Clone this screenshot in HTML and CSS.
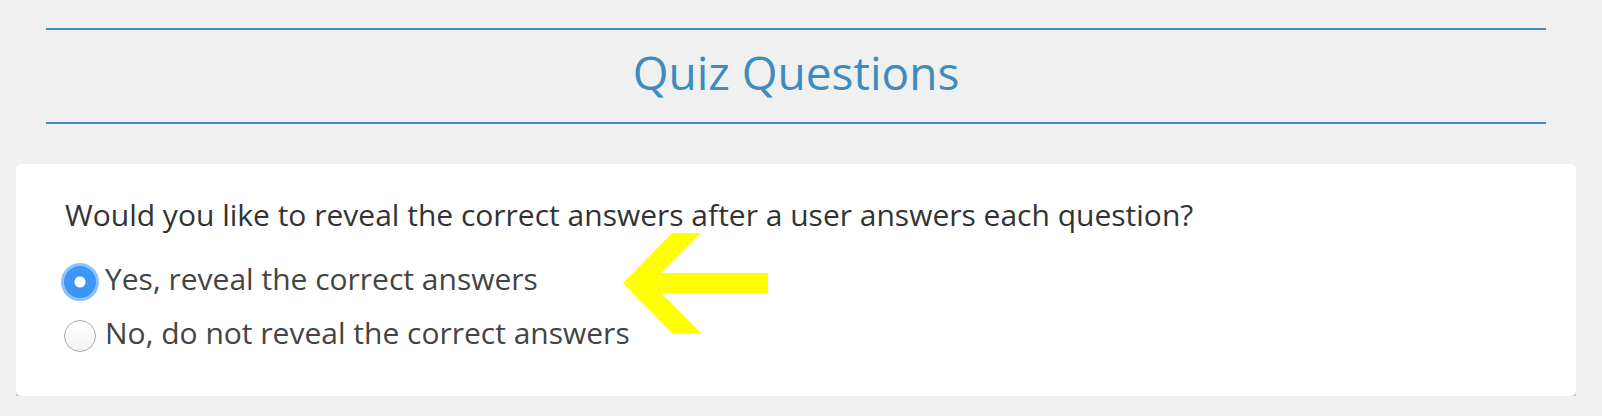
FILE: index.html
```html
<!DOCTYPE html>
<html lang="en">
<head>
    <meta charset="UTF-8">
    <meta name="viewport" content="width=device-width, initial-scale=1.0">
    <title>Quiz Questions</title>
    <link rel="stylesheet" href="styles.css">
</head>
<body>
    <div class="section-title">
        <h2>Quiz Questions</h2>
    </div>

    <div class="card">
        <p class="question">Would you like to reveal the correct answers after a user answers each question?</p>

        <label class="option">
            <input type="radio" name="reveal" value="yes" checked>
            <span>Yes, reveal the correct answers</span>
        </label>
        <label class="option">
            <input type="radio" name="reveal" value="no">
            <span>No, do not reveal the correct answers</span>
        </label>

        <svg class="pointer" width="146" height="101" viewBox="0 0 146 101">
            <polygon points="0,50 49,0 78,0 38,40 145,40 145,60 38,60 78,100 49,100" fill="#ffff00"/>
        </svg>
    </div>
</body>
</html>
```

FILE: styles.css
```css
body {
    margin: 0;
    padding-top: 28px;
    background-color: #f0f0f0;
    font-family: "Open Sans", Lato, sans-serif;
}
.section-title {
    margin: 0 56px 0 46px;
    border-top: 2px solid #3d8bbf;
    border-bottom: 2px solid #3d8bbf;
    height: 92px;
    box-sizing: content-box;
    padding-bottom: 0;
    display: flex;
    align-items: center;
    justify-content: center;
}
.section-title h2 {
    margin: 0 0 8px 0;
    font-size: 46px;
    font-weight: 400;
    color: #3d8bbf;
    line-height: 1;
}
.card {
    position: relative;
    margin: 40px 26px 0 16px;
    height: 232px;
    box-sizing: border-box;
    padding: 31px 48px 0 49px;
    background-color: #fff;
    border-radius: 5px;
    box-shadow: 0 4px 0 #c8c8c8;
}
.question {
    margin: 0 0 17px 0;
    font-size: 30px;
    line-height: 39px;
    color: #333;
}
.option {
    display: flex;
    align-items: center;
    height: 54px;
    margin-left: -1px;
    font-size: 30px;
    color: #444;
}
.option input {
    appearance: none;
    -webkit-appearance: none;
    margin: 7px 9px 0 0;
    width: 32px;
    height: 32px;
    border-radius: 50%;
    border: 1px solid #aaa;
    background: linear-gradient(#fff, #f2f2f2);
    box-sizing: border-box;
    flex-shrink: 0;
}
.option input:checked {
    border: 3px solid #8cc2fb;
    background: radial-gradient(circle, #fff 0 5px, #3d95f6 6px);
    width: 38px;
    height: 38px;
    margin: 7px 6px 0 -3px;
}
.pointer {
    position: absolute;
    left: 607px;
    top: 69px;
}
```
